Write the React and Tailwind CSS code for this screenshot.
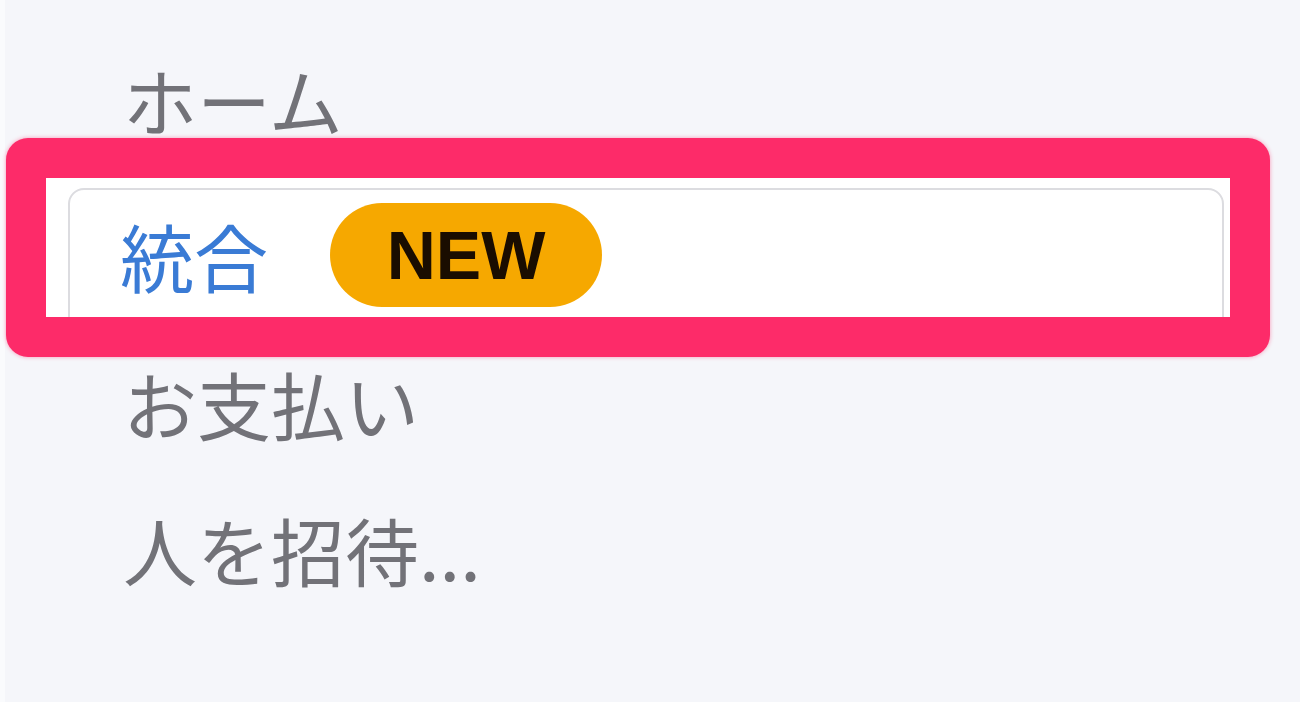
export default function App() {
  const cjk = { fontFamily: '"Noto Sans CJK JP", "Noto Sans", sans-serif' };
  return (
    <div className="w-[1300px] h-[702px] overflow-hidden bg-[#f5f6fa] flex" style={cjk}>
      <div className="w-[5px] h-full bg-[#fafbfd]" />
      <div className="flex-1 flex flex-col pt-[62px]">
        <div className="pl-[118px] h-[74px] leading-[74px] text-[74px] text-[#727278] whitespace-nowrap">ホーム</div>
        <div className="mt-[2px] ml-[1px] w-[1264px] h-[219px] border-[40px] border-[#fd2b69] rounded-[22px] bg-white overflow-hidden shadow-[0_0_4px_rgba(253,43,105,0.45)]">
          <div className="ml-[22px] mt-[10px] w-[1156px] h-[200px] border-2 border-[#dcdce0] rounded-[16px] bg-white pl-[50px] pt-[13px]">
            <div className="flex items-center h-[104px]">
              <span className="text-[74px] leading-[74px] text-[#3a7bd5] whitespace-nowrap">統合</span>
              <span
                className="ml-[62px] w-[272px] h-[104px] rounded-full bg-[#f6a800] flex items-center justify-center text-[68px] font-bold text-[#1a0d00] leading-none"
                style={{ fontFamily: '"Liberation Sans", Arial, sans-serif' }}
              >
                NEW
              </span>
            </div>
          </div>
        </div>
        <div className="mt-[9px] pl-[118px] h-[74px] leading-[74px] text-[74px] text-[#727278] whitespace-nowrap">お支払い</div>
        <div className="mt-[72px] pl-[118px] h-[74px] leading-[74px] text-[74px] text-[#727278] whitespace-nowrap">人を招待...</div>
      </div>
    </div>
  );
}
